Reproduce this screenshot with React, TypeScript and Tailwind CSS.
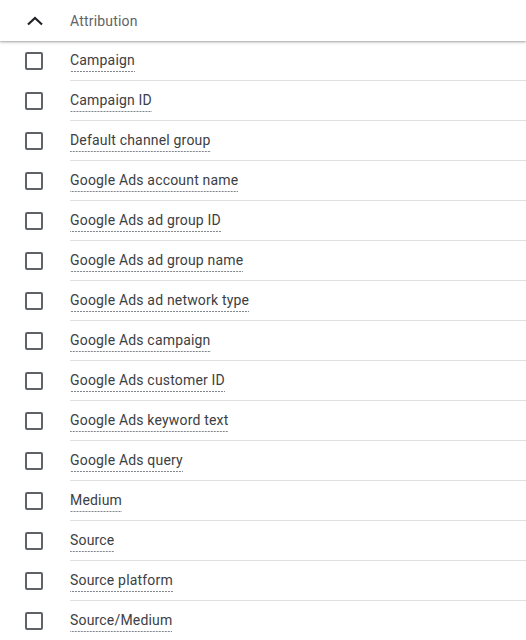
import React from 'react';

const fields = [
  'Campaign',
  'Campaign ID',
  'Default channel group',
  'Google Ads account name',
  'Google Ads ad group ID',
  'Google Ads ad group name',
  'Google Ads ad network type',
  'Google Ads campaign',
  'Google Ads customer ID',
  'Google Ads keyword text',
  'Google Ads query',
  'Medium',
  'Source',
  'Source platform',
  'Source/Medium',
];

const FieldRow: React.FC<{ label: string }> = ({ label }) => (
  <div className="flex h-10 items-center">
    <div className="flex w-[70px] shrink-0 items-center pl-[25px]">
      <div className="h-[18px] w-[18px] rounded-[2px] border-2 border-[#5f6368]" />
    </div>
    <div className="flex h-full flex-1 items-center border-b border-[#e0e0e0]">
      <span className="bg-[linear-gradient(to_right,#80868b_2px,transparent_2px)] bg-[length:3px_1px] bg-bottom bg-repeat-x pb-[2px] text-sm leading-5 tracking-[0.18px] text-[#3c4043]">
        {label}
      </span>
    </div>
  </div>
);

export default function App() {
  return (
    <div className="h-[640px] w-[526px] overflow-hidden bg-white font-['Roboto',sans-serif]">
      <div className="relative z-10 flex h-[41px] items-center bg-white shadow-[0_1px_2px_rgba(0,0,0,0.3),0_2px_4px_rgba(0,0,0,0.08)]">
        <div className="flex w-[70px] shrink-0 items-center pl-[26px]">
          <svg width="18" height="10" viewBox="0 0 18 10" className="text-[#202124]">
            <path d="M2 8.5L9 2l7 6.5" fill="none" stroke="currentColor" strokeWidth="2.2" />
          </svg>
        </div>
        <span className="text-sm tracking-[0.18px] text-[#5f6368]">Attribution</span>
      </div>
      <div>
        {fields.map((f) => (
          <FieldRow key={f} label={f} />
        ))}
      </div>
    </div>
  );
}
